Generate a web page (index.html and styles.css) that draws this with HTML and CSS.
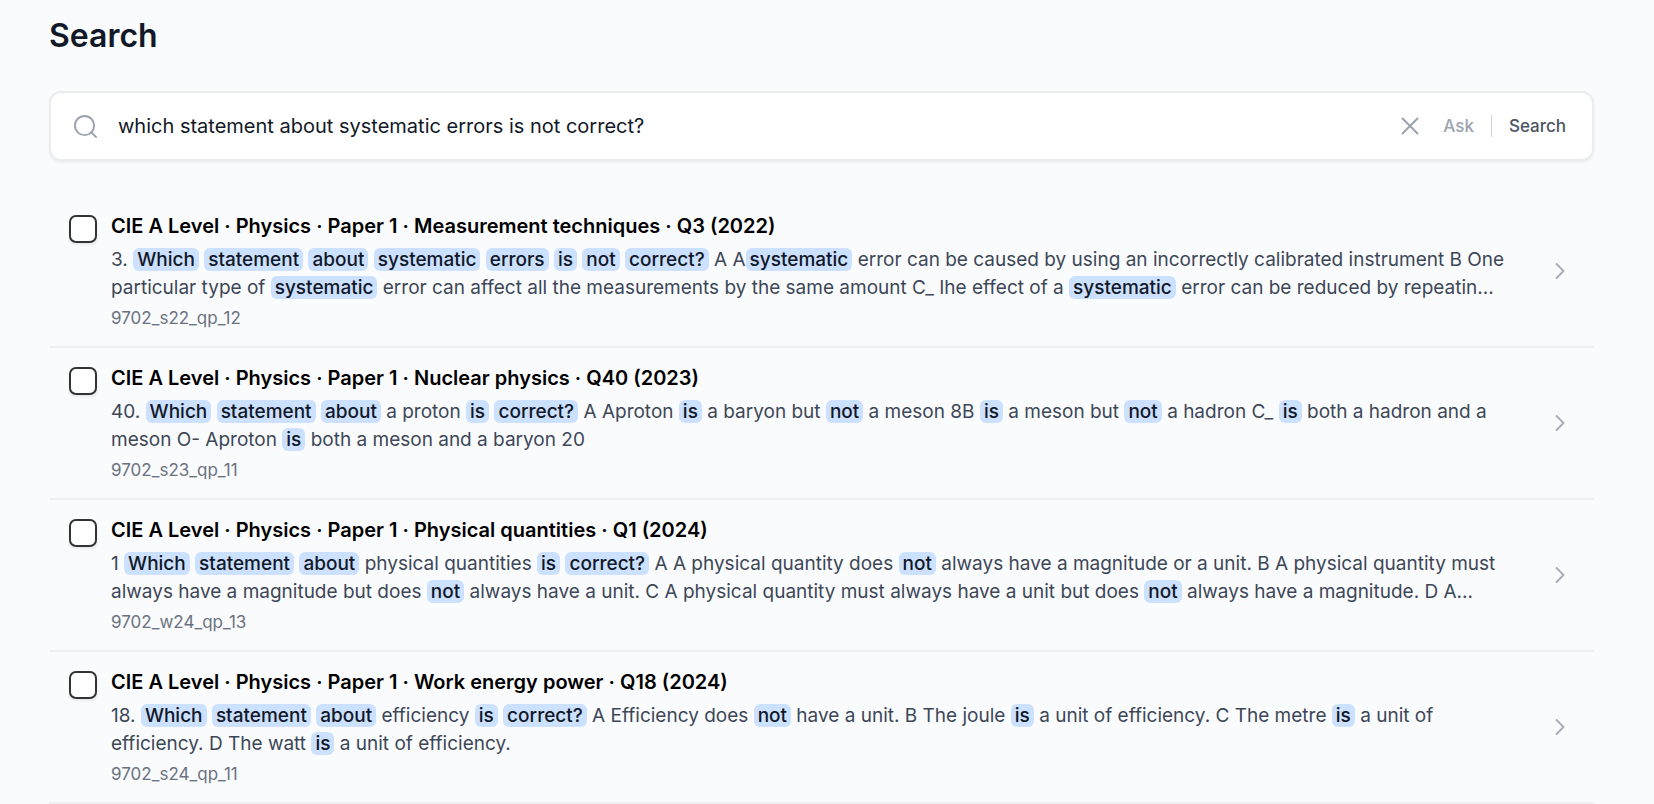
FILE: index.html
```html
<!DOCTYPE html>
<html lang="en">
<head>
<meta charset="utf-8">
<meta name="viewport" content="width=device-width, initial-scale=1">
<title>Search</title>
<link rel="stylesheet" href="styles.css">
</head>
<body>
<main class="page">
  <h1 class="page-title">Search</h1>
  <form class="search-bar" role="search">
    <svg class="search-icon" viewBox="0 0 26 26" aria-hidden="true"><circle cx="12" cy="12" r="10"/><path d="M19 19l5 5"/></svg>
    <input class="search-input" type="text" aria-label="Search questions" value="which statement about systematic errors is not correct?">
    <button class="clear-button" type="button" aria-label="Clear search"><svg class="clear-icon" viewBox="0 0 18 18" aria-hidden="true"><path d="M1.500 1.500l15 15M16.500 1.500l-15 15"/></svg></button>
    <button class="mode-button mode-ask" type="button">Ask</button>
    <span class="mode-divider"></span>
    <button class="mode-button" type="submit">Search</button>
  </form>
  <ul class="results">
    <li class="result">
      <input class="result-check" type="checkbox" id="r1" aria-labelledby="t1">
      <div class="result-body">
        <h2 class="result-title" id="t1">CIE A Level · Physics · Paper 1 · Measurement techniques · Q3 (2022)</h2>
        <p class="result-text">3. <mark>Which</mark> <mark>statement</mark> <mark>about</mark> <mark>systematic</mark> <mark>errors</mark> <mark>is</mark> <mark>not</mark> <mark>correct?</mark> A A<mark>systematic</mark> error can be caused by using an incorrectly calibrated instrument B One particular type of <mark>systematic</mark> error can affect all the measurements by the same amount C_ Ihe effect of a <mark>systematic</mark> error can be reduced by repeatin...</p>
        <p class="result-source">9702_s22_qp_12</p>
      </div>
      <svg class="chevron" viewBox="0 0 10 18" aria-hidden="true"><path d="M1.500 2l7 7-7 7"/></svg>
    </li>
    <li class="result">
      <input class="result-check" type="checkbox" id="r2" aria-labelledby="t2">
      <div class="result-body">
        <h2 class="result-title" id="t2">CIE A Level · Physics · Paper 1 · Nuclear physics · Q40 (2023)</h2>
        <p class="result-text">40. <mark>Which</mark> <mark>statement</mark> <mark>about</mark> a proton <mark>is</mark> <mark>correct?</mark> A Aproton <mark>is</mark> a baryon but <mark>not</mark> a meson 8B <mark>is</mark> a meson but <mark>not</mark> a hadron C_ <mark>is</mark> both a hadron and a meson O- Aproton <mark>is</mark> both a meson and a baryon 20</p>
        <p class="result-source">9702_s23_qp_11</p>
      </div>
      <svg class="chevron" viewBox="0 0 10 18" aria-hidden="true"><path d="M1.500 2l7 7-7 7"/></svg>
    </li>
    <li class="result">
      <input class="result-check" type="checkbox" id="r3" aria-labelledby="t3">
      <div class="result-body">
        <h2 class="result-title" id="t3">CIE A Level · Physics · Paper 1 · Physical quantities · Q1 (2024)</h2>
        <p class="result-text">1 <mark>Which</mark> <mark>statement</mark> <mark>about</mark> physical quantities <mark>is</mark> <mark>correct?</mark> A A physical quantity does <mark>not</mark> always have a magnitude or a unit. B A physical quantity must always have a magnitude but does <mark>not</mark> always have a unit. C A physical quantity must always have a unit but does <mark>not</mark> always have a magnitude. D A...</p>
        <p class="result-source">9702_w24_qp_13</p>
      </div>
      <svg class="chevron" viewBox="0 0 10 18" aria-hidden="true"><path d="M1.500 2l7 7-7 7"/></svg>
    </li>
    <li class="result">
      <input class="result-check" type="checkbox" id="r4" aria-labelledby="t4">
      <div class="result-body">
        <h2 class="result-title" id="t4">CIE A Level · Physics · Paper 1 · Work energy power · Q18 (2024)</h2>
        <p class="result-text">18. <mark>Which</mark> <mark>statement</mark> <mark>about</mark> efficiency <mark>is</mark> <mark>correct?</mark> A Efficiency does <mark>not</mark> have a unit. B The joule <mark>is</mark> a unit of efficiency. C The metre <mark>is</mark> a unit of efficiency. D The watt <mark>is</mark> a unit of efficiency.</p>
        <p class="result-source">9702_s24_qp_11</p>
      </div>
      <svg class="chevron" viewBox="0 0 10 18" aria-hidden="true"><path d="M1.500 2l7 7-7 7"/></svg>
    </li>
  </ul>
</main>
</body>
</html>
```
FILE: styles.css
```css
* { box-sizing: border-box; }
body {
  margin: 0;
  background: #fafbfd;
  color: #111827;
  font-family: Inter, "Liberation Sans", sans-serif;
}
.page { padding: 13px 60px 0 49px; }
.page-title {
  margin: 0 0 32px;
  font-size: 32px;
  line-height: 46px;
  font-weight: 600;
}
.search-bar {
  display: flex;
  align-items: center;
  height: 70px;
  padding: 0 20px 0 22px;
  background: #fff;
  border: 2px solid #ebecf0;
  border-radius: 12px;
  box-shadow: 0 2px 3px rgba(0, 0, 0, 0.05);
}
.search-icon, .clear-icon, .chevron {
  flex: none;
  fill: none;
  stroke: #9ca3af;
  stroke-width: 2;
  stroke-linecap: round;
  stroke-linejoin: round;
}
.search-icon { width: 25px; height: 25px; }
.search-input {
  flex: 1;
  min-width: 0;
  margin: 0 20px;
  padding: 0;
  border: 0;
  outline: 0;
  background: transparent;
  color: inherit;
  font: 400 20px/28px Inter, "Liberation Sans", sans-serif;
}
.clear-button, .mode-button {
  padding: 0;
  border: 0;
  background: transparent;
}
.clear-button { display: flex; margin-right: 24px; }
.clear-icon { width: 18px; height: 18px; }
.mode-button {
  padding-right: 6px;
  color: #4b5563;
  font: 500 17px/24px Inter, "Liberation Sans", sans-serif;
}
.mode-ask { padding-right: 17px; color: #9ca3af; }
.mode-divider { width: 1px; height: 22px; margin-right: 17px; background: #d1d5db; }
.results { margin: 35px 0 0; padding: 0; list-style: none; }
.result {
  display: flex;
  align-items: center;
  padding: 16px 29px 16px 20px;
  border-bottom: 2px solid #eeeff2;
}
.result-check {
  appearance: none;
  flex: none;
  align-self: flex-start;
  width: 28px;
  height: 28px;
  margin: 3px 14px 0 0;
  background: #fff;
  border: 2px solid #333;
  border-radius: 7px;
  box-shadow: 0 2px 3px rgba(0, 0, 0, 0.08);
}
.result-body { flex: 1; min-width: 0; margin-right: 24px; }
.result-title {
  margin: 0 0 6px;
  color: #000;
  font-size: 20px;
  line-height: 28px;
  font-weight: 600;
}
.result-text {
  margin: 0 0 4px;
  padding-right: 24px;
  color: #3d4757;
  font-size: 19px;
  line-height: 28px;
}
.result-text mark {
  padding: 0 4px;
  border-radius: 6px;
  background: #cce0ff;
  color: #111827;
  font-weight: 500;
}
.result-source {
  margin: 0;
  color: #6b7280;
  font-size: 17px;
  line-height: 24px;
}
.chevron { width: 10px; height: 18px; stroke: #a9adb8; }
```
